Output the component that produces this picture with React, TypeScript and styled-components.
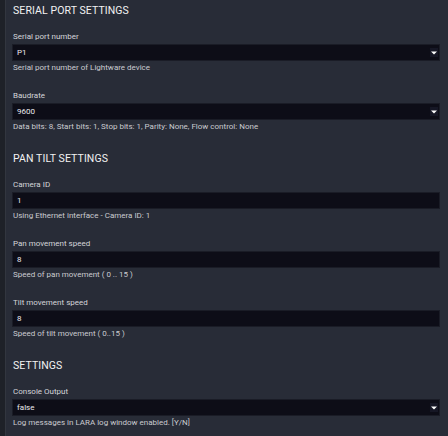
import React from 'react'
import styled, {createGlobalStyle} from 'styled-components'

const GlobalStyle = createGlobalStyle`
  html, body, #root {
    margin: 0;
    padding: 0;
    height: 100%;
    overflow: hidden;
    background: #282c37;
  }
  body {
    font-family: Roboto, "Liberation Sans", Arial, sans-serif;
  }
  * {
    box-sizing: border-box;
  }
`

const Page = styled.div`
  display: flex;
  height: 100%;
  background: #282c37;
`

const SideStrip = styled.div`
  width: 6px;
  flex-shrink: 0;
  background: #1e2128;
  border-right: 1px solid #32363f;
`

const Content = styled.div`
  flex: 1;
  display: flex;
  flex-direction: column;
  padding: 4px 8px 0 6px;
`

const Section = styled.section`
  display: flex;
  flex-direction: column;
  & + & {
    margin-top: 20px;
  }
`

const Heading = styled.h2`
  margin: 0 0 14px 1px;
  font-size: 10.5px;
  line-height: 14px;
  font-weight: 400;
  color: #f2f2f2;
  letter-spacing: 0.1px;
`

const Field = styled.div`
  display: flex;
  flex-direction: column;
  & + & {
    margin-top: 18px;
  }
`

const Label = styled.div`
  margin-left: 1px;
  font-size: 8px;
  line-height: 10px;
  color: #d4d5d9;
`

const ValueBox = styled.div`
  margin-top: 2px;
  height: 17px;
  display: flex;
  align-items: center;
  justify-content: space-between;
  padding: 0 1px 0 4px;
  background: #0d0d17;
  border: 1px solid #1a1c26;
  font-size: 8px;
  color: #eaeaee;
`

const Help = styled.div`
  margin: 2px 0 0 1px;
  font-size: 8px;
  line-height: 10px;
  color: #cacbd0;
`

const Arrow = styled.span`
  display: inline-flex;
  align-items: center;
  justify-content: center;
  width: 8px;
  height: 9px;
  background: #161725;
`

type Item = {label: string; value: string; help: string; select?: boolean}

const sections: {title: string; items: Item[]}[] = [
  {
    title: 'SERIAL PORT SETTINGS',
    items: [
      {label: 'Serial port number', value: 'P1', help: 'Serial port number of Lightware device', select: true},
      {
        label: 'Baudrate',
        value: '9600',
        help: 'Data bits: 8, Start bits: 1, Stop bits: 1, Parity: None, Flow control: None',
        select: true,
      },
    ],
  },
  {
    title: 'PAN TILT SETTINGS',
    items: [
      {label: 'Camera ID', value: '1', help: 'Using Ethernet interface - Camera ID: 1'},
      {label: 'Pan movement speed', value: '8', help: 'Speed of pan movement ( 0 .. 15 )'},
      {label: 'Tilt movement speed', value: '8', help: 'Speed of tilt movement ( 0..15 )'},
    ],
  },
  {
    title: 'SETTINGS',
    items: [
      {
        label: 'Console Output',
        value: 'false',
        help: 'Log messages in LARA log window enabled. [Y/N]',
        select: true,
      },
    ],
  },
]

const App = () => {
  return (
    <>
      <GlobalStyle />
      <Page>
        <SideStrip />
        <Content>
          {sections.map((s) => (
            <Section key={s.title}>
              <Heading>{s.title}</Heading>
              {s.items.map((it) => (
                <Field key={it.label}>
                  <Label>{it.label}</Label>
                  <ValueBox>
                    <span>{it.value}</span>
                    {it.select && (
                      <Arrow>
                        <svg width='6' height='4' viewBox='0 0 6 4'>
                          <path d='M0 0.5 H6 L3 3.5 Z' fill='#ffffff' />
                        </svg>
                      </Arrow>
                    )}
                  </ValueBox>
                  <Help>{it.help}</Help>
                </Field>
              ))}
            </Section>
          ))}
        </Content>
      </Page>
    </>
  )
}

export default App
